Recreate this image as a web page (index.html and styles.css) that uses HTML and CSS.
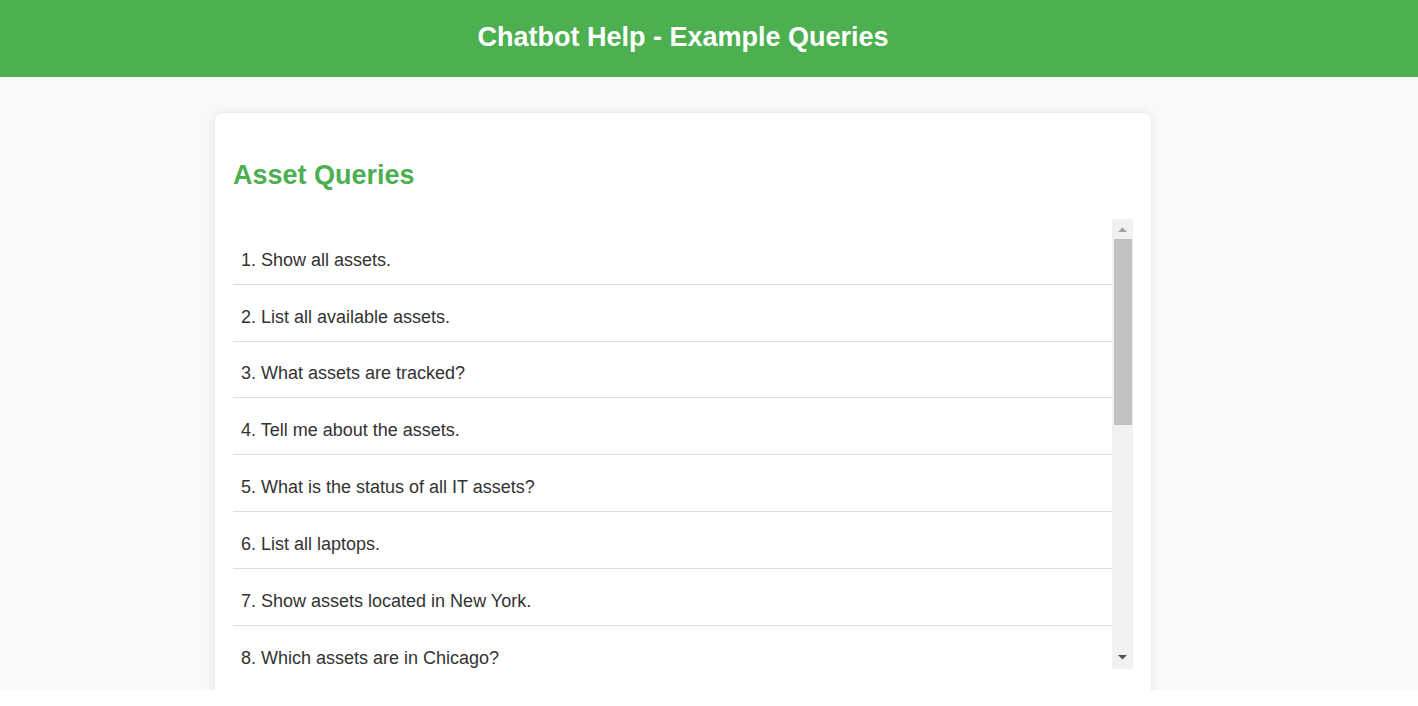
FILE: index.html
```html
<!DOCTYPE html>
<html>
<head>
<meta charset="utf-8">
<title>Chatbot Help - Example Queries</title>
<link rel="stylesheet" href="styles.css">
</head>
<body>
<header class="top">
  <h1 class="title">Chatbot Help - Example Queries</h1>
</header>
<main class="main">
  <section class="card">
    <h2 class="section-title">Asset Queries</h2>
    <div class="scroll-area">
      <div class="viewport">
        <ul class="queries">
          <li class="query">1. Show all assets.</li>
          <li class="query">2. List all available assets.</li>
          <li class="query">3. What assets are tracked?</li>
          <li class="query">4. Tell me about the assets.</li>
          <li class="query">5. What is the status of all IT assets?</li>
          <li class="query">6. List all laptops.</li>
          <li class="query">7. Show assets located in New York.</li>
          <li class="query">8. Which assets are in Chicago?</li>
          <li class="query">9. Show assets assigned to John Doe.</li>
          <li class="query">10. List assets with warranty expiring soon.</li>
          <li class="query">11. Which assets need maintenance?</li>
          <li class="query">12. Show all servers.</li>
          <li class="query">13. List all printers.</li>
          <li class="query">14. What is the total number of assets?</li>
          <li class="query">15. Show assets purchased in 2023.</li>
          <li class="query">16. List retired assets.</li>
          <li class="query">17. Which assets are unassigned?</li>
        </ul>
      </div>
      <div class="scrollbar">
        <div class="sb-button">
          <svg width="21" height="20" viewBox="0 0 21 20"><polygon points="6,13 15,13 10.5,8.5" fill="#a3a3a3"/></svg>
        </div>
        <div class="sb-track">
          <div class="sb-thumb"></div>
        </div>
        <div class="sb-button">
          <svg width="21" height="20" viewBox="0 0 21 20"><polygon points="6,6 15,6 10.5,10.5" fill="#505050"/></svg>
        </div>
      </div>
    </div>
  </section>
</main>
</body>
</html>
```
FILE: styles.css
```css
html {
  background: #ffffff;
}
body {
  margin: 0;
  font-family: "Liberation Sans", Arial, sans-serif;
  color: #333333;
}
.top {
  background: #4caf50;
  padding: 22px 52px 25px 0;
}
.title {
  margin: 0;
  font-size: 27px;
  line-height: 30px;
  font-weight: bold;
  color: #ffffff;
  text-align: center;
}
.main {
  height: 613px;
  overflow: hidden;
  background: #f9f9f9;
  box-sizing: border-box;
  padding: 36px 52px 0 0;
}
.card {
  width: 900px;
  margin: 0 auto;
  background: #ffffff;
  border-radius: 8px;
  box-shadow: 0 0 10px rgba(0, 0, 0, 0.1);
  padding: 18px 18px 30px;
}
.section-title {
  margin: 29px 0 29px;
  font-size: 27px;
  line-height: 30px;
  font-weight: bold;
  color: #4caf50;
}
.scroll-area {
  display: flex;
  height: 450px;
}
.viewport {
  flex: 1;
  min-width: 0;
  overflow-y: auto;
  scrollbar-width: none;
  padding-top: 9px;
}
.scrollbar {
  width: 21px;
  flex: none;
  display: flex;
  flex-direction: column;
  background: #f1f1f1;
}
.sb-button {
  height: 20px;
  flex: none;
}
.sb-button svg {
  display: block;
}
.sb-track {
  flex: 1;
  display: flex;
  flex-direction: column;
  padding: 0 1px 0 2px;
}
.sb-thumb {
  height: 186px;
  background: #c1c1c1;
}
.queries {
  list-style: none;
  margin: 0;
  padding: 0;
}
.query {
  margin-top: 7.84px;
  padding: 14px 8px;
  font-size: 18px;
  line-height: 20px;
  border-bottom: 1px solid #dddddd;
}
```
